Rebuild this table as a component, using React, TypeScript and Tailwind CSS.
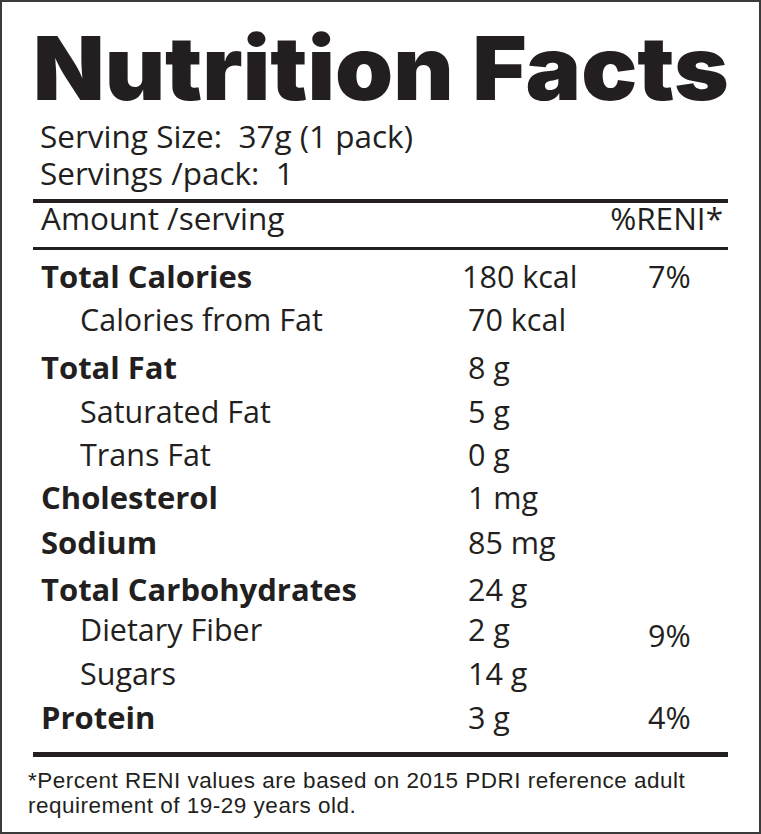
import React from "react";

type Row = { label: string; value: string; pct?: string; bold?: boolean; sub?: boolean; h: string };

const rows: Row[] = [
  { label: "Total Calories", value: "180 kcal", pct: "7%", bold: true, h: "h-[43px]" },
  { label: "Calories from Fat", value: "70 kcal", sub: true, h: "h-[48px]" },
  { label: "Total Fat", value: "8 g", bold: true, h: "h-[44px]" },
  { label: "Saturated Fat", value: "5 g", sub: true, h: "h-[43px]" },
  { label: "Trans Fat", value: "0 g", sub: true, h: "h-[43px]" },
  { label: "Cholesterol", value: "1 mg", bold: true, h: "h-[45px]" },
  { label: "Sodium", value: "85 mg", bold: true, h: "h-[47px]" },
  { label: "Total Carbohydrates", value: "24 g", bold: true, h: "h-[40px]" },
  { label: "Dietary Fiber", value: "2 g", pct: "9%", sub: true, h: "h-[44px]" },
  { label: "Sugars", value: "14 g", sub: true, h: "h-[44px]" },
  { label: "Protein", value: "3 g", pct: "4%", bold: true, h: "h-[40px]" },
];

export default function App() {
  return (
    <div className="w-[761px] h-[834px] bg-white border-2 border-[#3a3a3a] text-[#231f20] font-['Open_Sans',sans-serif] overflow-hidden">
      <div className="ml-[31px] w-[695px] flex flex-col">
        <div className="h-[115px] pt-[22px] overflow-visible">
          <div className="origin-left scale-x-[1.058] whitespace-nowrap font-['Inter',sans-serif] font-black text-[88px] leading-[88px]">
            Nutrition Facts
          </div>
        </div>
        <div className="pl-[7px] text-[31.5px] leading-[37px]">
          <div className="whitespace-pre">Serving Size:  37g (1 pack)</div>
          <div className="whitespace-pre">Servings /pack:  1</div>
        </div>
        <div className="mt-[8px] h-[4px] bg-[#231f20]" />
        <div className="flex justify-between pl-[8px] pr-[5px] text-[31.5px] leading-[30px] h-[44px]">
          <span>Amount /serving</span>
          <span>%RENI*</span>
        </div>
        <div className="h-[2.5px] bg-[#231f20]" />
        <div className="flex flex-col pt-[6px]">
          {rows.map((r) => (
            <div key={r.label} className={`flex items-start text-[30.5px] leading-[40px] ${r.h}`}>
              <div className={`w-[435px] shrink-0 whitespace-nowrap ${r.sub ? "pl-[47px]" : "pl-[8px] text-[31px]"} ${r.bold ? "font-bold" : ""}`}>
                {r.label}
              </div>
              <div className="w-[180px] shrink-0 whitespace-nowrap">
                <span className={r.label === "Total Calories" ? "-ml-[6px]" : ""}>{r.value}</span>
              </div>
              <div className={r.label === "Dietary Fiber" ? "pt-[6px]" : ""}>{r.pct ?? ""}</div>
            </div>
          ))}
        </div>
        <div className="mt-[15.5px] h-[5px] bg-[#231f20]" />
      </div>
      <div className="pl-[26px] pt-[11px] font-['Liberation_Sans',sans-serif] text-[22.5px] leading-[25px] tracking-[0.5px] text-[#231f20] whitespace-nowrap">
        <div>*Percent RENI values are based on 2015 PDRI reference adult</div>
        <div>requirement of 19-29 years old.</div>
      </div>
    </div>
  );
}
